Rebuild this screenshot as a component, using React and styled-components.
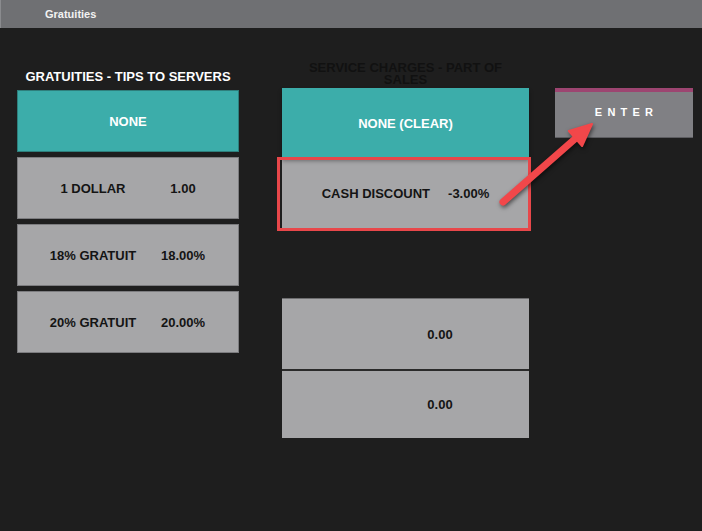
import React from "react";
import styled, { createGlobalStyle } from "styled-components";

const Global = createGlobalStyle`
  html, body { margin: 0; padding: 0; background: #1e1e1e; }
  body { font-family: "Liberation Sans", Arial, sans-serif; }
  * { box-sizing: border-box; }
`;

const Page = styled.div`
  position: relative;
  width: 702px;
  min-height: 531px;
  background: #1e1e1e;
  overflow: hidden;
`;

const TitleBar = styled.div`
  height: 28px;
  background: #6f7073;
  border-left: 1px solid #8a8b8e;
  display: flex;
  align-items: center;
  padding-left: 44px;
  color: #f2f2f2;
  font-size: 11px;
  font-weight: bold;
`;

const Main = styled.div`
  display: flex;
  align-items: flex-start;
  padding: 30px 9px 0 17px;
`;

const Column = styled.div`
  display: flex;
  flex-direction: column;
  width: ${(p) => p.$w}px;
  margin-left: ${(p) => p.$ml || 0}px;
`;

const Heading = styled.div`
  height: ${(p) => p.$h}px;
  display: flex;
  align-items: flex-end;
  justify-content: center;
  text-align: center;
  padding: 0 ${(p) => p.$px || 0}px ${(p) => p.$pb}px;
  font-size: 13px;
  font-weight: bold;
  line-height: ${(p) => p.$lh}px;
  color: ${(p) => p.$color};
`;

const Stack = styled.div`
  display: flex;
  flex-direction: column;
  gap: ${(p) => p.$gap}px;
`;

const TipButton = styled.div`
  height: 62px;
  display: grid;
  grid-template-columns: 110px 70px;
  justify-content: center;
  align-items: center;
  justify-items: center;
  font-size: 13px;
  font-weight: bold;
  color: ${(p) => (p.$teal ? "#ffffff" : "#141414")};
  background: ${(p) => (p.$teal ? "#3cadaa" : "#a6a6a8")};
  border: 1px solid ${(p) => (p.$teal ? "#2e7f7c" : "#7c7c7f")};
`;

const TipSingle = styled(TipButton)`
  display: flex;
  justify-content: center;
`;

const Slot = styled.div`
  position: relative;
  height: ${(p) => p.$h || 70}px;
`;

const ChargeButton = styled.div`
  height: 100%;
  display: flex;
  align-items: center;
  justify-content: center;
  gap: 18px;
  font-size: 13px;
  font-weight: bold;
  color: ${(p) => (p.$teal ? "#ffffff" : "#141414")};
  background: ${(p) => (p.$teal ? "#3cadaa" : "#a6a6a8")};
  border-top: ${(p) => p.$top || "none"};
  box-shadow: ${(p) => (p.$teal ? "0 3px 4px rgba(0,0,0,0.35)" : "none")};
  position: relative;
  z-index: ${(p) => (p.$teal ? 1 : 0)};
`;

const Label = styled.span`
  display: inline-block;
  min-width: ${(p) => (p.$ghost ? 51 : 0)}px;
`;

const Highlight = styled.div`
  position: absolute;
  left: -5px;
  right: -2px;
  top: -1px;
  bottom: -3px;
  border: 3px solid #e8474a;
  pointer-events: none;
  z-index: 2;
`;

const EnterButton = styled.div`
  height: 50px;
  background: #808084;
  border-top: 4px solid #9d4571;
  border-bottom: 1px solid #5c5c60;
  display: flex;
  align-items: center;
  justify-content: center;
  padding: 0 0 5px 5px;
  color: #ffffff;
  font-size: 11px;
  font-weight: bold;
  letter-spacing: 5.2px;
`;

const Arrow = styled.svg`
  position: absolute;
  left: 495px;
  top: 115px;
  width: 105px;
  height: 100px;
  overflow: visible;
  pointer-events: none;
  filter: drop-shadow(1px 2px 2px rgba(0, 0, 0, 0.55));
  z-index: 5;
`;

const tips = [
  { label: "1 DOLLAR", value: "1.00" },
  { label: "18% GRATUIT", value: "18.00%" },
  { label: "20% GRATUIT", value: "20.00%" },
];

export default function App() {
  return (
    <Page>
      <Global />
      <TitleBar>Gratuities</TitleBar>
      <Main>
        <Column $w={222}>
          <Heading $h={32} $pb={6} $lh={14} $color="#ffffff">
            GRATUITIES - TIPS TO SERVERS
          </Heading>
          <Stack $gap={5}>
            <TipSingle $teal>NONE</TipSingle>
            {tips.map((t) => (
              <TipButton key={t.label}>
                <span>{t.label}</span>
                <span>{t.value}</span>
              </TipButton>
            ))}
          </Stack>
        </Column>

        <Column $w={247} $ml={43}>
          <Heading $h={30} $pb={3} $lh={11.5} $px={25} $color="#111111">
            SERVICE CHARGES - PART OF SALES
          </Heading>
          <Stack $gap={0}>
            <Slot $h={70}>
              <ChargeButton $teal>NONE (CLEAR)</ChargeButton>
            </Slot>
            <Slot $h={70}>
              <ChargeButton>
                <Label>CASH DISCOUNT</Label>
                <span>-3.00%</span>
              </ChargeButton>
              <Highlight />
            </Slot>
            <Slot $h={70} />
            <Slot $h={71}>
              <ChargeButton $top="1px solid #6e6e70">
                <Label $ghost />
                <span>0.00</span>
              </ChargeButton>
            </Slot>
            <Slot $h={69}>
              <ChargeButton $top="2px solid #2a2a2a">
                <Label $ghost />
                <span>0.00</span>
              </ChargeButton>
            </Slot>
          </Stack>
        </Column>

        <Column $w={138} $ml={26}>
          <Heading $h={30} $pb={0} $lh={12} $color="#ffffff" />
          <EnterButton>ENTER</EnterButton>
        </Column>
      </Main>

      <Arrow viewBox="0 0 105 100">
        <line x1="8" y1="87" x2="82" y2="22.2" stroke="#f2474a" strokeWidth="7" strokeLinecap="round" />
        <polygon points="97,9 87.1,31 73.9,16" fill="#f2474a" stroke="#f2474a" strokeWidth="2" strokeLinejoin="round" />
      </Arrow>
    </Page>
  );
}
